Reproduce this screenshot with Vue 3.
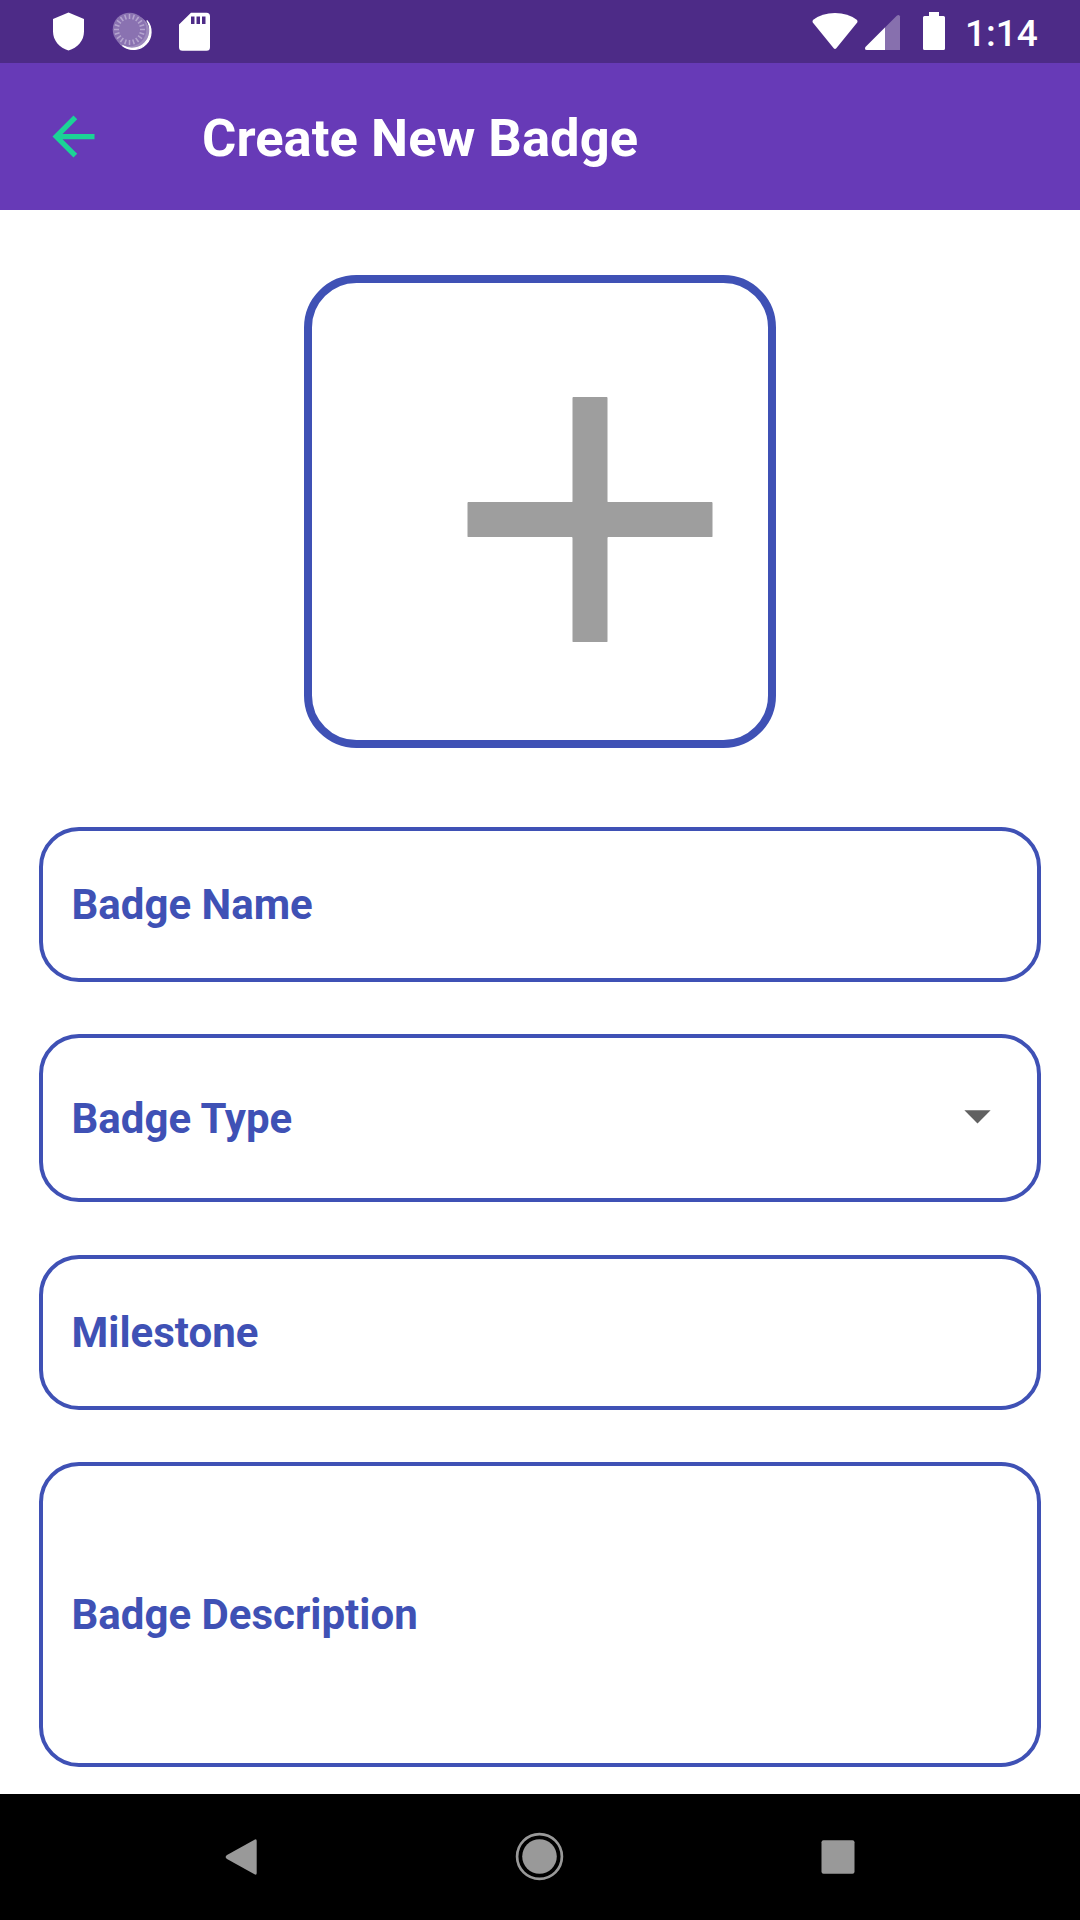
<script setup>
const fields = [
  { label: 'Badge Name', kind: 'name' },
  { label: 'Badge Type', kind: 'type', dropdown: true },
  { label: 'Milestone', kind: 'milestone' },
  { label: 'Badge Description', kind: 'description' },
]
const ticks = Array.from({ length: 20 }, (_, i) => i * 18)
</script>

<template>
  <div class="screen">
    <header class="status">
      <svg class="status-left" width="220" height="63" viewBox="0 0 220 63">
        <path d="M68.500 12.500 84 19v12.500c0 9-6.500 16.500-15.500 19C59.500 48 53 40.500 53 31.500V19z" fill="#fff" />
        <circle cx="132.500" cy="32.500" r="17.200" fill="#fff" opacity=".45" />
        <path d="M146.800 20.500A17.500 17.500 0 0 1 122.500 45.500A17.800 17.800 0 0 0 146.800 20.500z" fill="#fff" stroke="#fff" stroke-width="1.200" />
        <circle cx="129.500" cy="29.500" r="16.800" fill="#8a72b1" />
        <g stroke="#b5a5cf" stroke-width="1.500">
          <line v-for="a in ticks" :key="a" x1="129.500" y1="14" x2="129.500" y2="19" :transform="`rotate(${a} 129.5 29.5)`" />
        </g>
        <path fill="#fff" fill-rule="evenodd" d="M191 12.700h15.500a3.500 3.500 0 0 1 3.500 3.500v31a3.500 3.500 0 0 1-3.500 3.500h-24a3.500 3.500 0 0 1-3.500-3.500V24.500zM191 16.500v7.500h3.500v-7.500zM196.500 16.500v7.500h3.500v-7.500zM202 16.500v7.500h3.500v-7.500z" />
      </svg>
      <div class="status-right">
        <svg width="150" height="63" viewBox="800 0 150 63">
          <path d="M812.800 22.500Q811.800 21 813.300 19.800Q822 13 835 13T856.700 19.800Q858.200 21 857.200 22.500L836.300 48.300Q835 49.800 833.700 48.300z" fill="#fff" />
          <path d="M900 50V16.500Q899.500 14 897 15.500L865.500 47Q864 50 867 50z" fill="#fff" opacity=".33" />
          <path d="M885 50V27.500L865.500 47Q864 50 867 50z" fill="#fff" />
          <path d="M929 12h10v4h4.500q1.500 0 1.500 1.500v31q0 1.500-1.500 1.500h-19q-1.500 0-1.500-1.500v-31q0-1.500 1.500-1.500h4.500z" fill="#fff" />
        </svg>
        <span class="time">1:14</span>
      </div>
    </header>

    <div class="appbar">
      <svg class="back" width="63" height="63" viewBox="0 0 24 24">
        <path d="M20 11H7.830l5.590-5.590L12 4l-8 8 8 8 1.410-1.410L7.830 13H20z" fill="#1bd396" />
      </svg>
      <h1 class="title">Create New Badge</h1>
    </div>

    <main class="content">
      <div class="picker">
        <svg width="420" height="420" viewBox="0 -0.030 24 24">
          <path d="M5.050 11h5.900q.05 0 .05-.05v-5.900q0-.05.05-.05h1.900q.05 0 .05.05v5.900q0 .05.05.05h5.900q.05 0 .05.05v1.900q0 .05-.05.05h-5.900q-.05 0-.05.05v5.900q0 .05-.05.05h-1.900q-.05 0-.05-.05v-5.900q0-.05-.05-.05h-5.900q-.05 0-.05-.05v-1.900q0-.05.05-.05z" fill="#9e9e9e" />
        </svg>
      </div>
      <div v-for="f in fields" :key="f.label" class="field" :class="f.kind">
        <span>{{ f.label }}</span>
        <svg v-if="f.dropdown" class="caret" width="63" height="63" viewBox="0 0 24 24">
          <path d="M7 10l5 5 5-5z" fill="#616161" />
        </svg>
      </div>
    </main>

    <nav class="nav">
      <svg width="1080" height="126" viewBox="0 1794 1080 126">
        <g fill="#999">
          <path d="M254.500 1839.700Q256.700 1838.500 256.700 1841V1873Q256.700 1875.500 254.500 1874.300L227 1859Q224.300 1857 227 1855z" />
          <circle cx="539.500" cy="1856.500" r="17.300" />
          <rect x="821.500" y="1840.300" width="33" height="33.400" rx="2" />
        </g>
        <circle cx="539.500" cy="1856.500" r="22.400" fill="none" stroke="#999" stroke-width="2.700" />
      </svg>
    </nav>
  </div>
</template>

<style>
body {
  margin: 0;
  background: #fff;
}
</style>

<style scoped>
.screen {
  width: 1080px;
  height: 1920px;
  display: flex;
  flex-direction: column;
  background: #fff;
  overflow: hidden;
  font-family: Roboto, "Liberation Sans", sans-serif;
}
svg {
  display: block;
  flex: none;
}
.status {
  height: 63px;
  flex: none;
  display: flex;
  justify-content: space-between;
  background: #4d2b87;
}
.status-right {
  display: flex;
  width: 280px;
}
.time {
  margin-left: 15px;
  padding-top: 2px;
  font-size: 37px;
  line-height: 63px;
  font-weight: 500;
  color: #fff;
}
.appbar {
  height: 147px;
  flex: none;
  box-sizing: border-box;
  display: flex;
  align-items: center;
  padding-left: 42px;
  background: #673ab7;
}
.title {
  margin: 3px 0 0 97px;
  font-size: 52.5px;
  line-height: 62px;
  font-weight: 700;
  letter-spacing: 0.06px;
  color: #fff;
}
.content {
  flex: 1;
  display: flex;
  flex-direction: column;
  padding: 65px 39px 0;
}
.picker {
  width: 472px;
  height: 473px;
  flex: none;
  box-sizing: border-box;
  align-self: center;
  margin-bottom: 79px;
  padding: 26px 0 0 68px;
  border: 8px solid #3f51b5;
  border-radius: 52.5px;
}
.field {
  flex: none;
  box-sizing: border-box;
  display: flex;
  align-items: center;
  justify-content: space-between;
  margin-bottom: 52px;
  padding: 0 28px 0 28.500px;
  border: 4px solid #3f51b5;
  border-radius: 40px;
  font-size: 42px;
  line-height: 50px;
  font-weight: 700;
  color: #3f51b5;
}
.name {
  height: 155px;
}
.type {
  height: 168px;
  margin-bottom: 53px;
}
.type span {
  padding-top: 2px;
}
.caret {
  margin-bottom: 6px;
}
.milestone {
  height: 155px;
}
.description {
  height: 305px;
  margin-bottom: 0;
}
.nav {
  height: 126px;
  flex: none;
  background: #000;
}
</style>
